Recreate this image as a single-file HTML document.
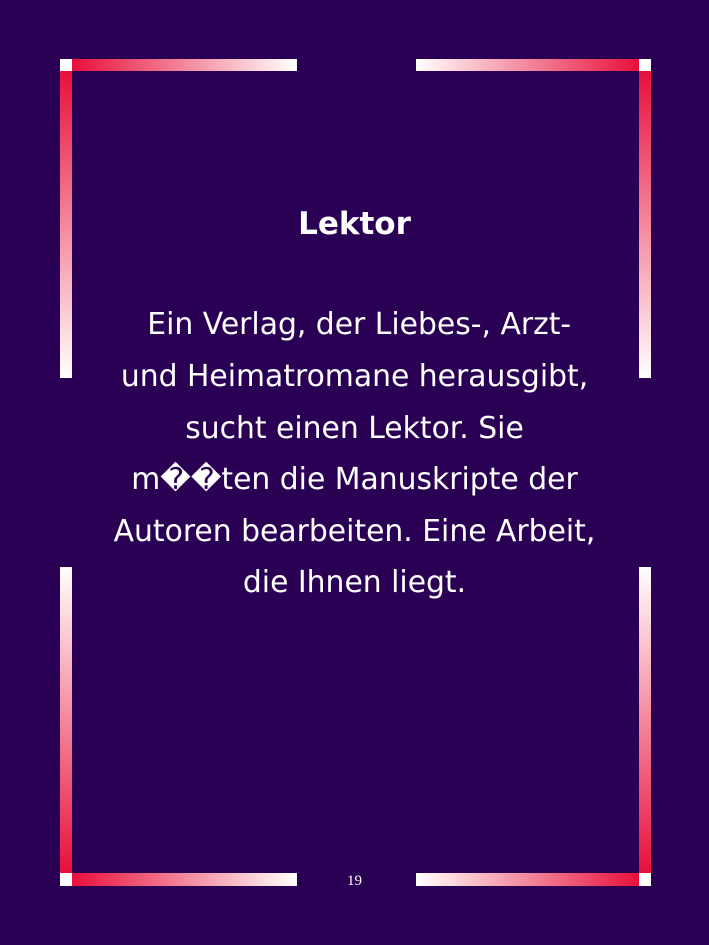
<!DOCTYPE html>
<html><head><meta charset="utf-8"><style>
html,body{margin:0;padding:0}
body{width:709px;height:945px;background:#2a0055;position:relative;overflow:hidden;font-family:"DejaVu Sans","Liberation Sans",sans-serif;color:#fff}
.b{position:absolute}
.w{background:#fff}
.l{position:absolute;left:0;width:709px;text-align:center;white-space:nowrap}
.t{font-size:29.8px;line-height:52px}
</style></head><body>
<div class="b w" style="left:60px;top:59px;width:12px;height:12px"></div>
<div class="b" style="left:72px;top:59px;width:225px;height:12px;background:linear-gradient(to right,#e8103a,#fff)"></div>
<div class="b" style="left:60px;top:71px;width:12px;height:307px;background:linear-gradient(to bottom,#e8103a,#fff)"></div>
<div class="b w" style="left:639px;top:59px;width:12px;height:12px"></div>
<div class="b" style="left:416px;top:59px;width:223px;height:12px;background:linear-gradient(to left,#e8103a,#fff)"></div>
<div class="b" style="left:639px;top:71px;width:12px;height:307px;background:linear-gradient(to bottom,#e8103a,#fff)"></div>
<div class="b" style="left:60px;top:567px;width:12px;height:306px;background:linear-gradient(to top,#e8103a,#fff)"></div>
<div class="b w" style="left:60px;top:873px;width:12px;height:13px"></div>
<div class="b" style="left:72px;top:873px;width:225px;height:13px;background:linear-gradient(to right,#e8103a,#fff)"></div>
<div class="b" style="left:639px;top:567px;width:12px;height:306px;background:linear-gradient(to top,#e8103a,#fff)"></div>
<div class="b w" style="left:639px;top:873px;width:12px;height:13px"></div>
<div class="b" style="left:416px;top:873px;width:223px;height:13px;background:linear-gradient(to left,#e8103a,#fff)"></div>
<div class="l" style="top:204px;font-size:31px;font-weight:bold;line-height:40px">Lektor</div>
<div class="l t" style="top:299px">&nbsp;Ein Verlag, der Liebes-, Arzt-</div>
<div class="l t" style="top:351px">und Heimatromane herausgibt,</div>
<div class="l t" style="top:403px">sucht einen Lektor. Sie</div>
<div class="l t" style="top:454px">m��ten die Manuskripte der</div>
<div class="l t" style="top:506px">Autoren bearbeiten. Eine Arbeit,</div>
<div class="l t" style="top:557px">die Ihnen liegt.</div>
<div class="l" style="top:871px;font-family:'Liberation Serif',serif;font-size:15px;line-height:20px">19</div>
</body></html>
